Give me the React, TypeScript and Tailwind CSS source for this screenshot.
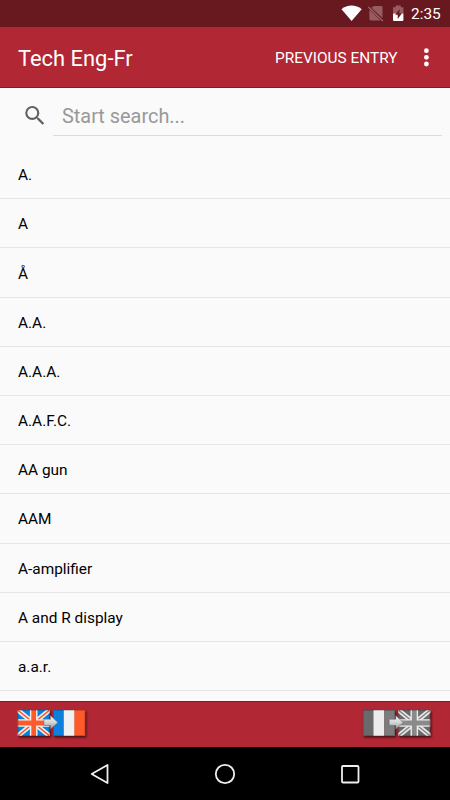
const entries = [
  'A.',
  'A',
  'Å',
  'A.A.',
  'A.A.A.',
  'A.A.F.C.',
  'AA gun',
  'AAM',
  'A-amplifier',
  'A and R display',
  'a.a.r.',
];

type Palette = { blue: string; white: string; red: string };

const color: Palette = { blue: '#0b80df', white: '#f2f2f2', red: '#ff5a2c' };
const gray: Palette = { blue: '#6a6a6a', white: '#ececec', red: '#7b7b7b' };

function British({ x, colors, cross }: { x: number; colors: Palette; cross: string }) {
  return (
    <svg x={x} y="2" width="32" height="26" viewBox="0 0 32 26">
      <rect width="32" height="26" fill={colors.blue} />
      <path d="M0 0L32 26M32 0L0 26" stroke={colors.white} strokeWidth="4.6" />
      <path d="M0 0L32 26M32 0L0 26" stroke={cross} strokeWidth="1.6" />
      <path d="M16 0V26M0 13H32" stroke={colors.white} strokeWidth="7.6" />
      <path d="M16 0V26M0 13H32" stroke={cross} strokeWidth="4.8" />
      <rect x=".5" y=".5" width="31" height="25" fill="none" stroke="#000" strokeOpacity=".18" />
    </svg>
  );
}

function French({ x, colors }: { x: number; colors: Palette }) {
  return (
    <svg x={x} y="2" width="32.3" height="26" viewBox="0 0 32.3 26">
      <rect width="11" height="26" fill={colors.blue} />
      <rect x="10.8" width="10.8" height="26" fill={colors.white} />
      <rect x="21.5" width="10.8" height="26" fill={colors.red} />
      <rect x=".5" y=".5" width="31.3" height="25" fill="none" stroke="#000" strokeOpacity=".18" />
    </svg>
  );
}

function Arrow({ x }: { x: number }) {
  return (
    <path
      transform={`translate(${x} 7.3)`}
      d="M0 4H6.5V.3L14 7.2L6.5 14V10.2H0Z"
      fill="url(#metal)"
      stroke="#666"
      strokeWidth=".5"
    />
  );
}

function Flags({ reverse = false }: { reverse?: boolean }) {
  return (
    <svg width="74" height="32" viewBox="0 0 74 32">
      <defs>
        <linearGradient id="metal" x1="0" y1="0" x2="0" y2="1">
          <stop offset="0" stopColor="#fafafa" />
          <stop offset=".5" stopColor="#d4d4d4" />
          <stop offset="1" stopColor="#929292" />
        </linearGradient>
        <filter id="shadow" x="-10%" y="-10%" width="125%" height="130%">
          <feDropShadow dx="1.2" dy="1.4" stdDeviation="1" floodColor="#000" floodOpacity=".65" />
        </filter>
      </defs>
      <g filter="url(#shadow)">
        {reverse ? <French x={2.7} colors={gray} /> : <British x={0.7} colors={color} cross="#ff5a2c" />}
        {reverse ? <British x={38.3} colors={gray} cross="#8a8a8a" /> : <French x={36} colors={color} />}
      </g>
      <Arrow x={reverse ? 29.2 : 26.9} />
    </svg>
  );
}

function StatusBar() {
  return (
    <div className="flex h-[27px] shrink-0 items-center justify-end bg-[#68181f] pr-[8px]">
      <svg width="69" height="27" viewBox="0 0 69 27">
        <path d="M.5 9.2C6.2 4.4 15 4.4 20.7 9.2L10.6 21Z" fill="#fff" />
        <g fill="#fff" fillOpacity=".3">
          <path d="M33 6H40.2Q41.5 6 41.5 7.3V18L30.3 7.8Z" />
          <path d="M28.4 9.2L39.5 20.4H29.7Q28.4 20.4 28.4 19.1Z" />
        </g>
        <path d="M27 7L41.6 21" stroke="#68181f" strokeWidth="1.6" />
        <path d="M27.4 7L41.9 21" stroke="#fff" strokeOpacity=".35" strokeWidth="1.2" />
        <path d="M52 7.2H54.7V5.4H59.8V7.2H62.4V13.5H52Z" fill="#fff" fillOpacity=".3" />
        <path d="M52 13.5H62.4V20Q62.4 21 61.4 21H53Q52 21 52 20Z" fill="#fff" />
        <path d="M58.8 9L54.2 14.8H56.7V19L61 13.3H58.3Z" fill="#68181f" />
      </svg>
      <span className="ml-[1px] w-[31px] whitespace-nowrap pt-[2px] text-[15.4px] leading-none text-white">2:35</span>
    </div>
  );
}

export default function App() {
  return (
    <div className="flex h-[800px] w-[450px] flex-col overflow-hidden bg-[#fafafa] font-['Roboto',sans-serif]">
      <StatusBar />

      <header className="flex h-[61px] shrink-0 items-center border-b border-[#a60c16] bg-[#b12734] pl-[18px] text-white">
        <h1 className="pt-[3px] text-[21.9px] leading-none">Tech Eng-Fr</h1>
        <button className="ml-auto pt-[4px] text-[15.4px] leading-none">PREVIOUS ENTRY</button>
        <svg className="ml-[24px] mr-[20.5px]" width="8" height="20" viewBox="0 0 8 20" fill="#fff">
          <circle cx="4.4" cy="3.7" r="2.4" />
          <circle cx="4.4" cy="10.3" r="2.4" />
          <circle cx="4.4" cy="17" r="2.4" />
        </svg>
      </header>

      <div className="flex h-[62px] shrink-0 pl-[22px] pr-[8px]">
        <svg className="mt-[14px] shrink-0" width="26" height="26" viewBox="0 -.6 24 24" fill="#616161">
          <path d="M15.5 14h-.79l-.28-.27A6.471 6.471 0 0 0 16 9.5 6.5 6.5 0 1 0 9.5 16c1.61 0 3.09-.59 4.23-1.57l.27.28v.79l5 4.99L20.49 19l-4.99-5zm-6 0C7.01 14 5 11.99 5 9.5S7.01 5 9.5 5 14 7.01 14 9.5 11.99 14 9.5 14z" />
        </svg>
        <div className="ml-[5px] flex h-[48px] flex-1 items-center border-b border-[#dcdcdc] pl-[9px] pt-[9px]">
          <input
            className="w-full bg-transparent text-[19.9px] leading-none outline-none placeholder:text-[#989898]"
            placeholder="Start search..."
          />
        </div>
      </div>

      <ul className="min-h-0 flex-1 overflow-hidden">
        {entries.map((entry) => (
          <li
            key={entry}
            className="flex h-[49.2px] items-center border-b border-[#e6e6e6] pl-[18px] pt-[3.5px] text-[15.4px] leading-none text-black"
          >
            {entry}
          </li>
        ))}
      </ul>

      <footer className="flex h-[46px] shrink-0 items-center justify-between border-t border-[#a60c16] bg-[#b12734] pb-px pl-[17px] pr-[16px]">
        <Flags />
        <Flags reverse />
      </footer>

      <nav className="flex h-[53px] shrink-0 items-center justify-between bg-black pl-[88px] pr-[88px]">
        <svg width="24" height="24" viewBox="0 0 24 24" fill="none" stroke="#eee" strokeWidth="1.8" strokeLinejoin="round">
          <path d="M19.5 3V21L3.7 12Z" />
        </svg>
        <svg width="24" height="24" viewBox="0 0 24 24" fill="none" stroke="#eee" strokeWidth="1.8">
          <circle cx="12" cy="12" r="9.2" />
        </svg>
        <svg width="24" height="24" viewBox="0 0 24 24" fill="none" stroke="#eee" strokeWidth="1.8">
          <rect x="4" y="4" width="16.5" height="16.5" rx="1" />
        </svg>
      </nav>
    </div>
  );
}
